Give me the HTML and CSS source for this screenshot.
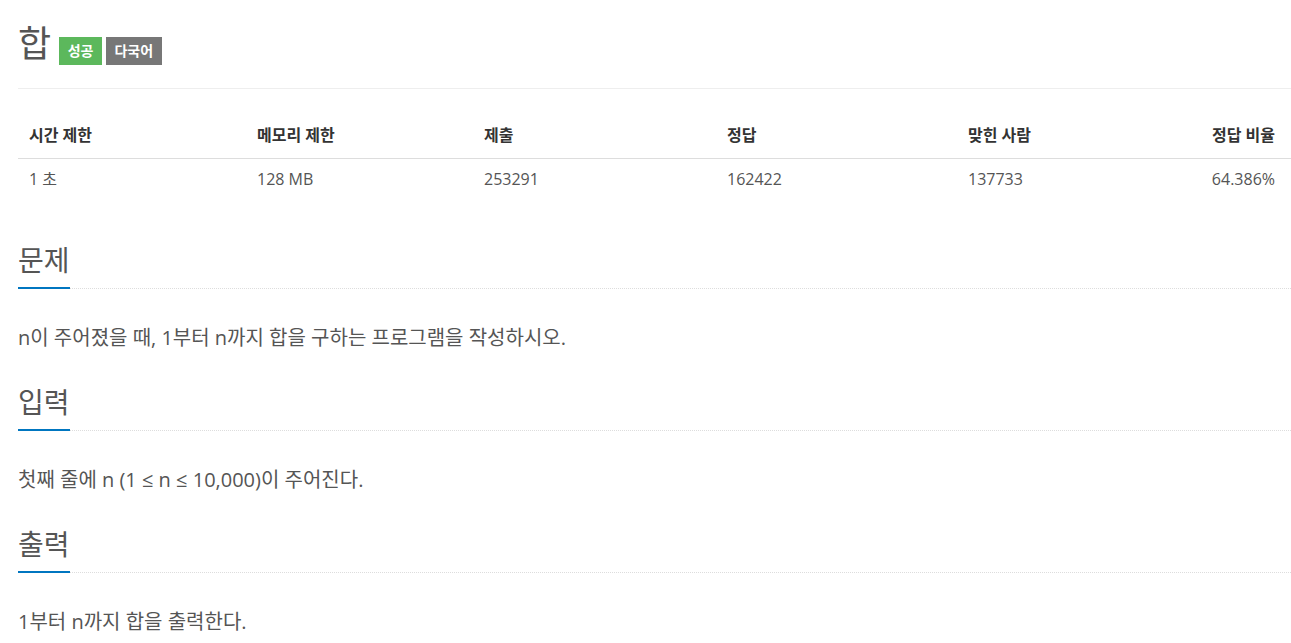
FILE: index.html
```html
<!DOCTYPE html>
<html lang="ko">
<head>
    <meta charset="UTF-8">
    <meta name="viewport" content="width=device-width, initial-scale=1.0">
    <title>합</title>
    <link rel="stylesheet" href="styles.css">
</head>
<body>
    <div class="page-header">
        <h1>합</h1>
        <span class="label label-success">성공</span>
        <span class="label label-default">다국어</span>
    </div>

    <table class="problem-info">
        <colgroup>
            <col class="c1">
            <col class="c2">
            <col class="c3">
            <col class="c4">
            <col class="c5">
            <col class="c6">
        </colgroup>
        <thead>
            <tr>
                <th>시간 제한</th>
                <th>메모리 제한</th>
                <th>제출</th>
                <th>정답</th>
                <th>맞힌 사람</th>
                <th class="right">정답 비율</th>
            </tr>
        </thead>
        <tbody>
            <tr>
                <td>1 초</td>
                <td>128 MB</td>
                <td>253291</td>
                <td>162422</td>
                <td>137733</td>
                <td class="right">64.386%</td>
            </tr>
        </tbody>
    </table>

    <section class="problem-section">
        <div class="headline"><h2>문제</h2></div>
        <p class="problem-text">n이 주어졌을 때, 1부터 n까지 합을 구하는 프로그램을 작성하시오.</p>
    </section>

    <section class="problem-section">
        <div class="headline"><h2>입력</h2></div>
        <p class="problem-text">첫째 줄에 n (1 ≤ n ≤ 10,000)이 주어진다.</p>
    </section>

    <section class="problem-section">
        <div class="headline"><h2>출력</h2></div>
        <p class="problem-text">1부터 n까지 합을 출력한다.</p>
    </section>
</body>
</html>
```

FILE: styles.css
```css
body {
    font-family: 'Open Sans', 'Noto Sans CJK KR', sans-serif;
    color: #555;
    background-color: #fff;
    margin: 0;
    padding: 0 0 0 18px;
    overflow: hidden;
}
.page-header {
    display: flex;
    align-items: flex-start;
    padding: 20px 0 20px 0;
    border-bottom: 1px solid #eee;
}
.page-header h1 {
    margin: 0 8px 0 0;
    font-size: 36px;
    font-weight: normal;
    line-height: 48px;
    color: #555;
}
.label {
    display: inline-block;
    margin-top: 17px;
    margin-right: 4px;
    height: 28px;
    line-height: 28px;
    padding: 0 8.5px;
    font-size: 14px;
    font-weight: bold;
    color: #fff;
}
.label-success {
    background-color: #5cb85c;
}
.label-default {
    background-color: #777;
}
.problem-info {
    width: 100%;
    table-layout: fixed;
    border-collapse: collapse;
    margin-top: 23px;
    font-size: 16px;
}
.problem-info .c1 { width: 228px; }
.problem-info .c2 { width: 227px; }
.problem-info .c3 { width: 243px; }
.problem-info .c4 { width: 241px; }
.problem-info th {
    text-align: left;
    font-weight: bold;
    color: #333;
    font-size: 16px;
    line-height: 20px;
    padding: 13px 11px;
    border-bottom: 1px solid #ddd;
}
.problem-info td {
    line-height: 20px;
    padding: 10px 11px;
    color: #555;
}
.problem-info .right {
    text-align: right;
    padding-right: 16px;
}
.problem-section {
    margin-top: 32px;
}
.problem-info + .problem-section {
    margin-top: 44px;
}
.headline {
    border-bottom: 1px dotted #ddd;
}
.headline h2 {
    display: inline-block;
    margin: 0 0 -1px 0;
    padding-bottom: 10px;
    font-size: 28px;
    font-weight: normal;
    line-height: 34px;
    color: #555;
    border-bottom: 2px solid #0076c0;
}
.problem-text {
    margin: 34px 0 0 0;
    font-size: 20px;
    line-height: 30px;
}
```
